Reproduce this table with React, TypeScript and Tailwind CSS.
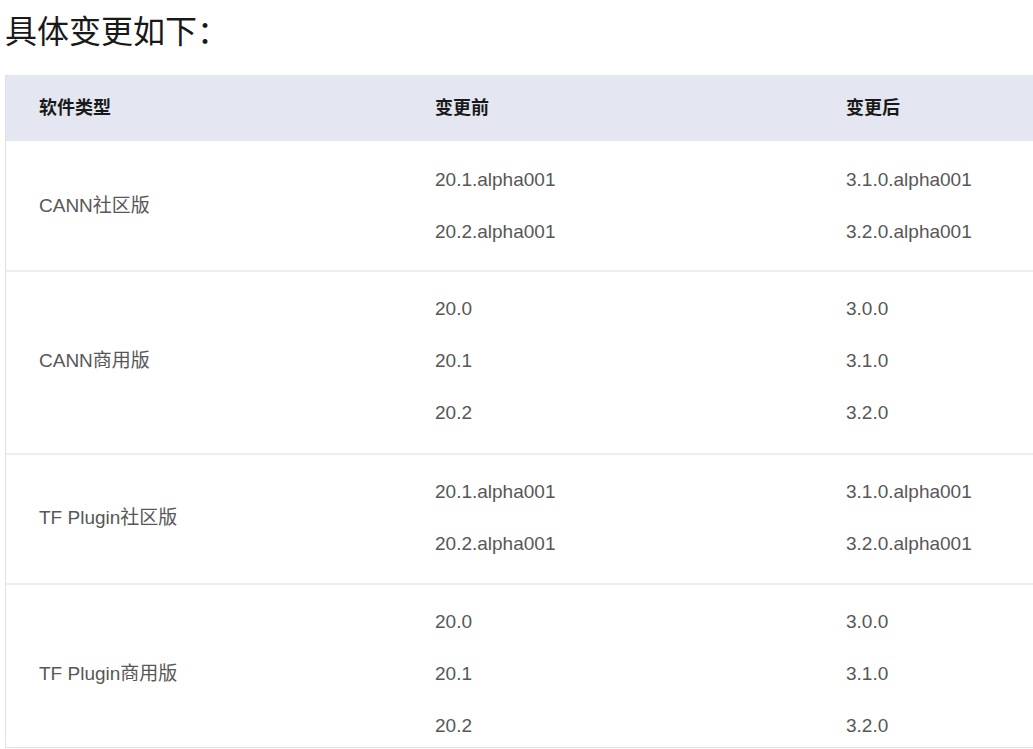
import React from "react";

type Row = { name: string; before: string[]; after: string[]; pt: string; pb: string };

const rows: Row[] = [
  { name: "CANN社区版", before: ["20.1.alpha001", "20.2.alpha001"], after: ["3.1.0.alpha001", "3.2.0.alpha001"], pt: "pt-[13px]", pb: "pb-[12px]" },
  { name: "CANN商用版", before: ["20.0", "20.1", "20.2"], after: ["3.0.0", "3.1.0", "3.2.0"], pt: "pt-[11px]", pb: "pb-[14px]" },
  { name: "TF Plugin社区版", before: ["20.1.alpha001", "20.2.alpha001"], after: ["3.1.0.alpha001", "3.2.0.alpha001"], pt: "pt-[11px]", pb: "pb-[13px]" },
  { name: "TF Plugin商用版", before: ["20.0", "20.1", "20.2"], after: ["3.0.0", "3.1.0", "3.2.0"], pt: "pt-[11px]", pb: "pb-[14px]" },
];

export default function App() {
  return (
    <div
      className="w-[1033px] h-[749px] overflow-hidden bg-white"
      style={{ fontFamily: '"Liberation Sans", "Noto Sans CJK SC", sans-serif' }}
    >
      <div className="pl-[5px] pt-[8px] h-[56px] text-[32px] leading-[48px] text-[#191919]">具体变更如下：</div>
      <div className="mt-[19px] ml-[5px] h-[673px] overflow-hidden border-l border-b border-[#dfe1ec]">
        <div className="flex h-[66px] items-center bg-[#e4e7f1] text-[18px] font-bold text-[#191919]">
          <div className="w-[396px] pl-[33px]">软件类型</div>
          <div className="w-[411px] pl-[33px]">变更前</div>
          <div className="flex-1 pl-[33px]">变更后</div>
        </div>
        {rows.map((r) => (
          <div key={r.name} className={`flex border-b-2 border-[#eeeeee] text-[19px] text-[#575757] ${r.pt} ${r.pb}`}>
            <div className="w-[396px] pl-[33px] flex items-center">{r.name}</div>
            <div className="w-[411px] pl-[33px] flex flex-col">
              {r.before.map((v) => (
                <div key={v} className="h-[52px] leading-[52px]">{v}</div>
              ))}
            </div>
            <div className="flex-1 pl-[33px] flex flex-col">
              {r.after.map((v) => (
                <div key={v} className="h-[52px] leading-[52px]">{v}</div>
              ))}
            </div>
          </div>
        ))}
      </div>
    </div>
  );
}
